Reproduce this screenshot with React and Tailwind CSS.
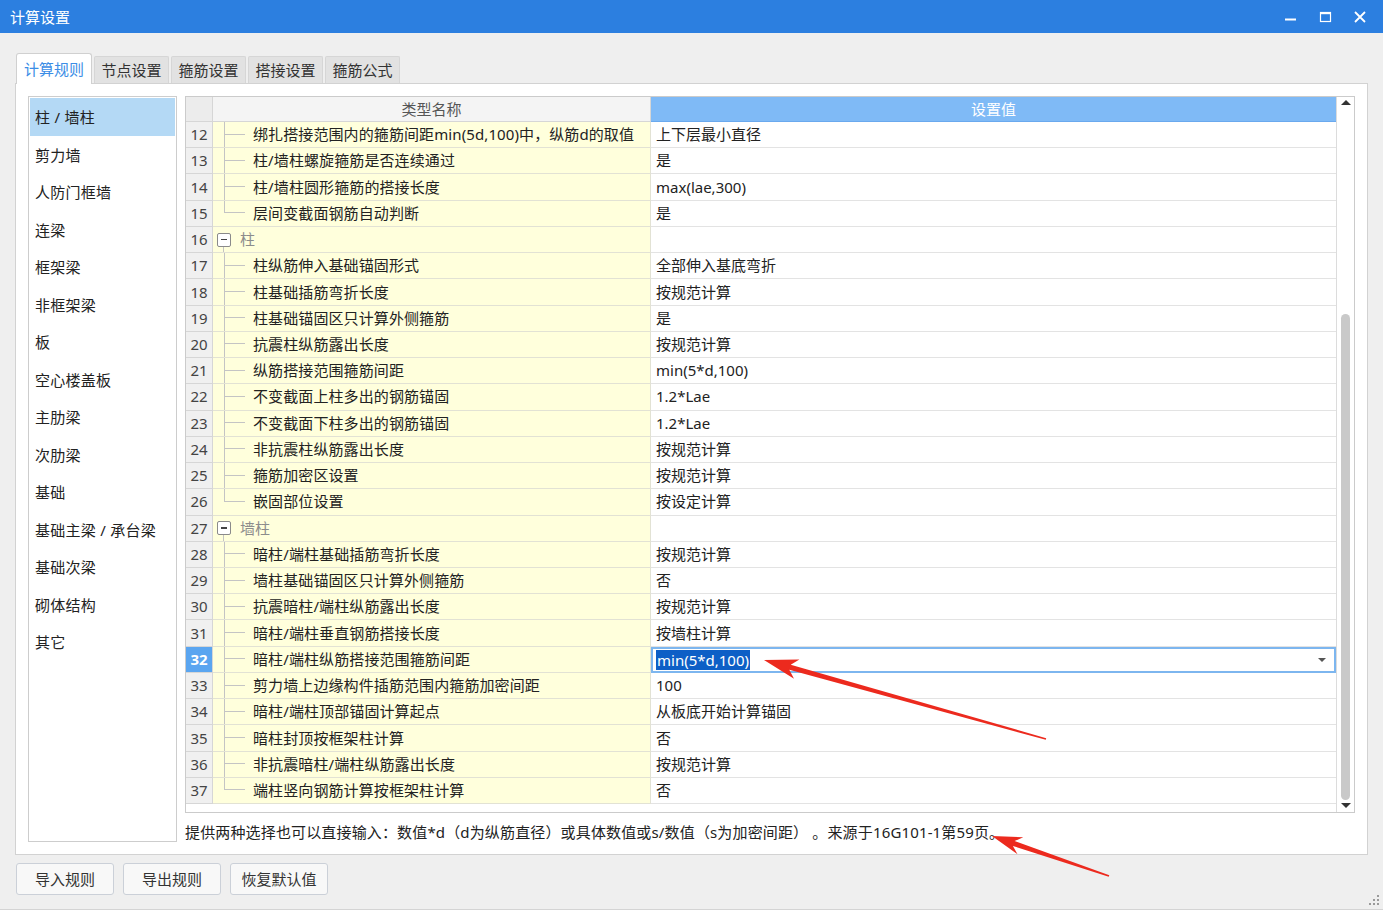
import React from "react";

const sideItems = [
  "柱 / 墙柱",
  "剪力墙",
  "人防门框墙",
  "连梁",
  "框架梁",
  "非框架梁",
  "板",
  "空心楼盖板",
  "主肋梁",
  "次肋梁",
  "基础",
  "基础主梁 / 承台梁",
  "基础次梁",
  "砌体结构",
  "其它",
];

const tabs = ["计算规则", "节点设置", "箍筋设置", "搭接设置", "箍筋公式"];

const rows = [
  { n: 12, name: "绑扎搭接范围内的箍筋间距min(5d,100)中，纵筋d的取值", value: "上下层最小直径" },
  { n: 13, name: "柱/墙柱螺旋箍筋是否连续通过", value: "是" },
  { n: 14, name: "柱/墙柱圆形箍筋的搭接长度", value: "max(lae,300)" },
  { n: 15, name: "层间变截面钢筋自动判断", value: "是", last: true },
  { n: 16, name: "柱", group: true },
  { n: 17, name: "柱纵筋伸入基础锚固形式", value: "全部伸入基底弯折" },
  { n: 18, name: "柱基础插筋弯折长度", value: "按规范计算" },
  { n: 19, name: "柱基础锚固区只计算外侧箍筋", value: "是" },
  { n: 20, name: "抗震柱纵筋露出长度", value: "按规范计算" },
  { n: 21, name: "纵筋搭接范围箍筋间距", value: "min(5*d,100)" },
  { n: 22, name: "不变截面上柱多出的钢筋锚固", value: "1.2*Lae" },
  { n: 23, name: "不变截面下柱多出的钢筋锚固", value: "1.2*Lae" },
  { n: 24, name: "非抗震柱纵筋露出长度", value: "按规范计算" },
  { n: 25, name: "箍筋加密区设置", value: "按规范计算" },
  { n: 26, name: "嵌固部位设置", value: "按设定计算", last: true },
  { n: 27, name: "墙柱", group: true },
  { n: 28, name: "暗柱/端柱基础插筋弯折长度", value: "按规范计算" },
  { n: 29, name: "墙柱基础锚固区只计算外侧箍筋", value: "否" },
  { n: 30, name: "抗震暗柱/端柱纵筋露出长度", value: "按规范计算" },
  { n: 31, name: "暗柱/端柱垂直钢筋搭接长度", value: "按墙柱计算" },
  { n: 32, name: "暗柱/端柱纵筋搭接范围箍筋间距", value: "min(5*d,100)", selected: true },
  { n: 33, name: "剪力墙上边缘构件插筋范围内箍筋加密间距", value: "100" },
  { n: 34, name: "暗柱/端柱顶部锚固计算起点", value: "从板底开始计算锚固" },
  { n: 35, name: "暗柱封顶按框架柱计算", value: "否" },
  { n: 36, name: "非抗震暗柱/端柱纵筋露出长度", value: "按规范计算" },
  { n: 37, name: "端柱竖向钢筋计算按框架柱计算", value: "否", last: true },
];

function arrowPoints(tip, tail, L, W) {
  const dx = tail[0] - tip[0];
  const dy = tail[1] - tip[1];
  const len = Math.hypot(dx, dy);
  const u = [dx / len, dy / len];
  const n = [-u[1], u[0]];
  const p = (a, b) => [tip[0] + a * u[0] + b * n[0], tip[1] + a * u[1] + b * n[1]];
  const pts = [
    tip,
    p(L, W),
    p(L - 7, 2.6),
    [tail[0] + 0.8 * n[0], tail[1] + 0.8 * n[1]],
    [tail[0] - 0.8 * n[0], tail[1] - 0.8 * n[1]],
    p(L - 7, -2.6),
    p(L, -W),
  ];
  return pts.map((q) => q[0].toFixed(1) + "," + q[1].toFixed(1)).join(" ");
}

function TreeCell({ r }) {
  if (r.group) {
    return (
      <div className="flex items-stretch h-full">
        <div className="ml-[3px] w-[15px] flex flex-col items-center">
          <div className="flex-1" />
          <div className="w-[14px] h-[14px] border border-[#8a8a8a] rounded-[2px] bg-white flex items-center justify-center">
            <div className="w-[6px] h-[1.5px] bg-[#444]" />
          </div>
          <div className="flex-1 w-px bg-[#c4c4c4]" />
        </div>
        <div className="ml-[9px] flex items-center text-[#8c8c8c]">{r.name}</div>
      </div>
    );
  }
  return (
    <div className="flex items-stretch h-full">
      <div className="w-[40px] shrink-0 flex flex-col">
        <div className="ml-[11px] w-[21px] h-1/2 border-l border-b border-[#c4c4c4]" />
        <div className={`ml-[11px] h-1/2 ${r.last ? "" : "border-l border-[#c4c4c4]"}`} />
      </div>
      <div className="flex items-center text-[#222] whitespace-nowrap tracking-[0.1px]">{r.name}</div>
    </div>
  );
}

function Row({ r }) {
  return (
    <div className="flex h-[26.24px] leading-[25px]">
      <div
        className={`w-[27px] shrink-0 border-r border-b border-[#d6d6d6] flex items-center justify-center ${
          r.selected ? "bg-[#5aa5f0] text-white font-bold" : "bg-[#f0f0f0] text-[#444]"
        }`}
      >
        {r.n}
      </div>
      <div className="w-[438px] shrink-0 bg-[#ffffdc] border-r border-b border-[#e2e2d4]">
        <TreeCell r={r} />
      </div>
      {r.selected ? (
        <div className="flex-1 bg-white border-2 border-[#7db6ef] flex items-center pl-[3px] pr-[8px]">
          <span className="bg-[#0d5fc6] text-white leading-[20px] px-[1px]">{r.value}</span>
          <div className="ml-auto w-0 h-0 border-l-[4px] border-r-[4px] border-t-[4px] border-l-transparent border-r-transparent border-t-[#555]" />
        </div>
      ) : (
        <div className="flex-1 bg-white border-b border-[#e3e3e3] flex items-center pl-[5px] text-[#222]">
          {r.value}
        </div>
      )}
    </div>
  );
}

export default function App() {
  return (
    <div className="w-[1383px] h-[910px] bg-[#efefef] flex flex-col relative overflow-hidden border-b border-[#d4d4d4] text-[15px] font-['Noto_Sans','Noto_Sans_CJK_SC',sans-serif]">
      {/* title bar */}
      <div className="h-[33px] shrink-0 bg-[#2c7fe0] flex items-center pl-[10px] text-white">
        <span className="leading-[20px]">计算设置</span>
        <div className="ml-auto flex items-center">
          <svg width="35" height="33" viewBox="0 0 35 33">
            <rect x="13" y="18.5" width="11" height="2" fill="#fff" />
          </svg>
          <svg width="35" height="33" viewBox="0 0 35 33">
            <rect x="13.5" y="12.5" width="10" height="9" fill="none" stroke="#fff" strokeWidth="1.2" />
            <rect x="13" y="12" width="11" height="2.2" fill="#fff" />
          </svg>
          <svg width="35" height="33" viewBox="0 0 35 33" className="mr-[6px]">
            <path d="M13 12 L23 22 M23 12 L13 22" stroke="#fff" strokeWidth="1.8" />
          </svg>
        </div>
      </div>

      <div className="flex-1 flex flex-col px-[15px] pt-[20px]">
        {/* tabs */}
        <div className="h-[30px] flex items-end pl-[1px]">
          {tabs.map((t, i) =>
            i === 0 ? (
              <div
                key={t}
                className="w-[76px] h-[31px] -mb-px relative z-10 bg-white border border-b-0 border-[#d0d0d0] rounded-t-[3px] flex items-center justify-center text-[#3b8de6]"
              >
                {t}
              </div>
            ) : (
              <div
                key={t}
                className="w-[75px] h-[27px] ml-[2px] bg-[#e2e2e2] border border-b-0 border-[#d6d6d6] rounded-t-[2px] flex items-center justify-center text-[#333]"
              >
                {t}
              </div>
            )
          )}
        </div>

        {/* panel */}
        <div className="h-[772px] bg-white border border-[#d2d2d2] p-[12px] flex gap-[8px]">
          {/* side list */}
          <div className="w-[149px] shrink-0 border border-[#cdcdcd] p-px">
            {sideItems.map((s, i) => (
              <div
                key={s}
                className={`h-[37.5px] flex items-center pl-[5px] pt-[1px] text-[#222] tracking-[0.25px] ${
                  i === 0 ? "bg-[#b4d9f5]" : ""
                }`}
              >
                {s}
              </div>
            ))}
          </div>

          {/* right */}
          <div className="flex-1 flex flex-col">
            <div className="h-[717px] border border-[#cbcbcb] flex">
              <div className="flex-1 flex flex-col">
                <div className="h-[25px] flex leading-[22px]">
                  <div className="w-[27px] shrink-0 bg-[#ececec] border-r border-b border-[#d6d6d6]" />
                  <div className="w-[438px] shrink-0 bg-[#f4f4f4] border-r border-b border-[#d6d6d6] flex items-center justify-center text-[#555]">
                    类型名称
                  </div>
                  <div className="flex-1 bg-[#7fbaf6] border-b border-[#6aa9ee] flex items-center justify-center text-white">
                    设置值
                  </div>
                </div>
                {rows.map((r) => (
                  <Row key={r.n} r={r} />
                ))}
              </div>
              {/* scrollbar */}
              <div className="w-[18px] shrink-0 border-l border-[#dcdcdc] bg-white flex flex-col items-center pt-[3px] pb-[4px]">
                <div className="w-0 h-0 border-l-[5px] border-r-[5px] border-b-[5px] border-l-transparent border-r-transparent border-b-[#333]" />
                <div className="flex-1" />
                <div className="w-[9px] h-[486px] rounded-full bg-[#c9c9c9]" />
                <div className="mt-[3px] w-0 h-0 border-l-[5px] border-r-[5px] border-t-[5px] border-l-transparent border-r-transparent border-t-[#333]" />
              </div>
            </div>
            <div className="pt-[9px] leading-[20px] text-[#222] whitespace-nowrap tracking-[0.15px]">
              提供两种选择也可以直接输入：数值*d（d为纵筋直径）或具体数值或s/数值（s为加密间距） 。来源于16G101-1第59页。
            </div>
          </div>
        </div>

        {/* buttons */}
        <div className="mt-[8px] flex gap-[9px] pl-[1px]">
          {["导入规则", "导出规则", "恢复默认值"].map((b) => (
            <div
              key={b}
              className="w-[98px] h-[32px] bg-[#f8f8f8] border border-[#cbd0d8] rounded-[3px] flex items-center justify-center text-[#333]"
            >
              {b}
            </div>
          ))}
        </div>
      </div>

      {/* resize grip */}
      <svg className="absolute right-[3px] bottom-[3px]" width="12" height="12" viewBox="0 0 12 12">
        {[
          [9, 1],
          [5, 5],
          [9, 5],
          [1, 9],
          [5, 9],
          [9, 9],
        ].map(([x, y]) => (
          <rect key={x + "-" + y} x={x} y={y} width="2" height="2" fill="#9a9a9a" />
        ))}
      </svg>

      {/* annotation arrows */}
      <svg className="absolute left-0 top-0 pointer-events-none" width="1383" height="910" viewBox="0 0 1383 910">
        <polygon points={arrowPoints([764, 660], [1046, 739], 34, 10)} fill="#ec2a1e" />
        <polygon points={arrowPoints([992, 836], [1109, 876], 30, 9)} fill="#ec2a1e" />
      </svg>
    </div>
  );
}
